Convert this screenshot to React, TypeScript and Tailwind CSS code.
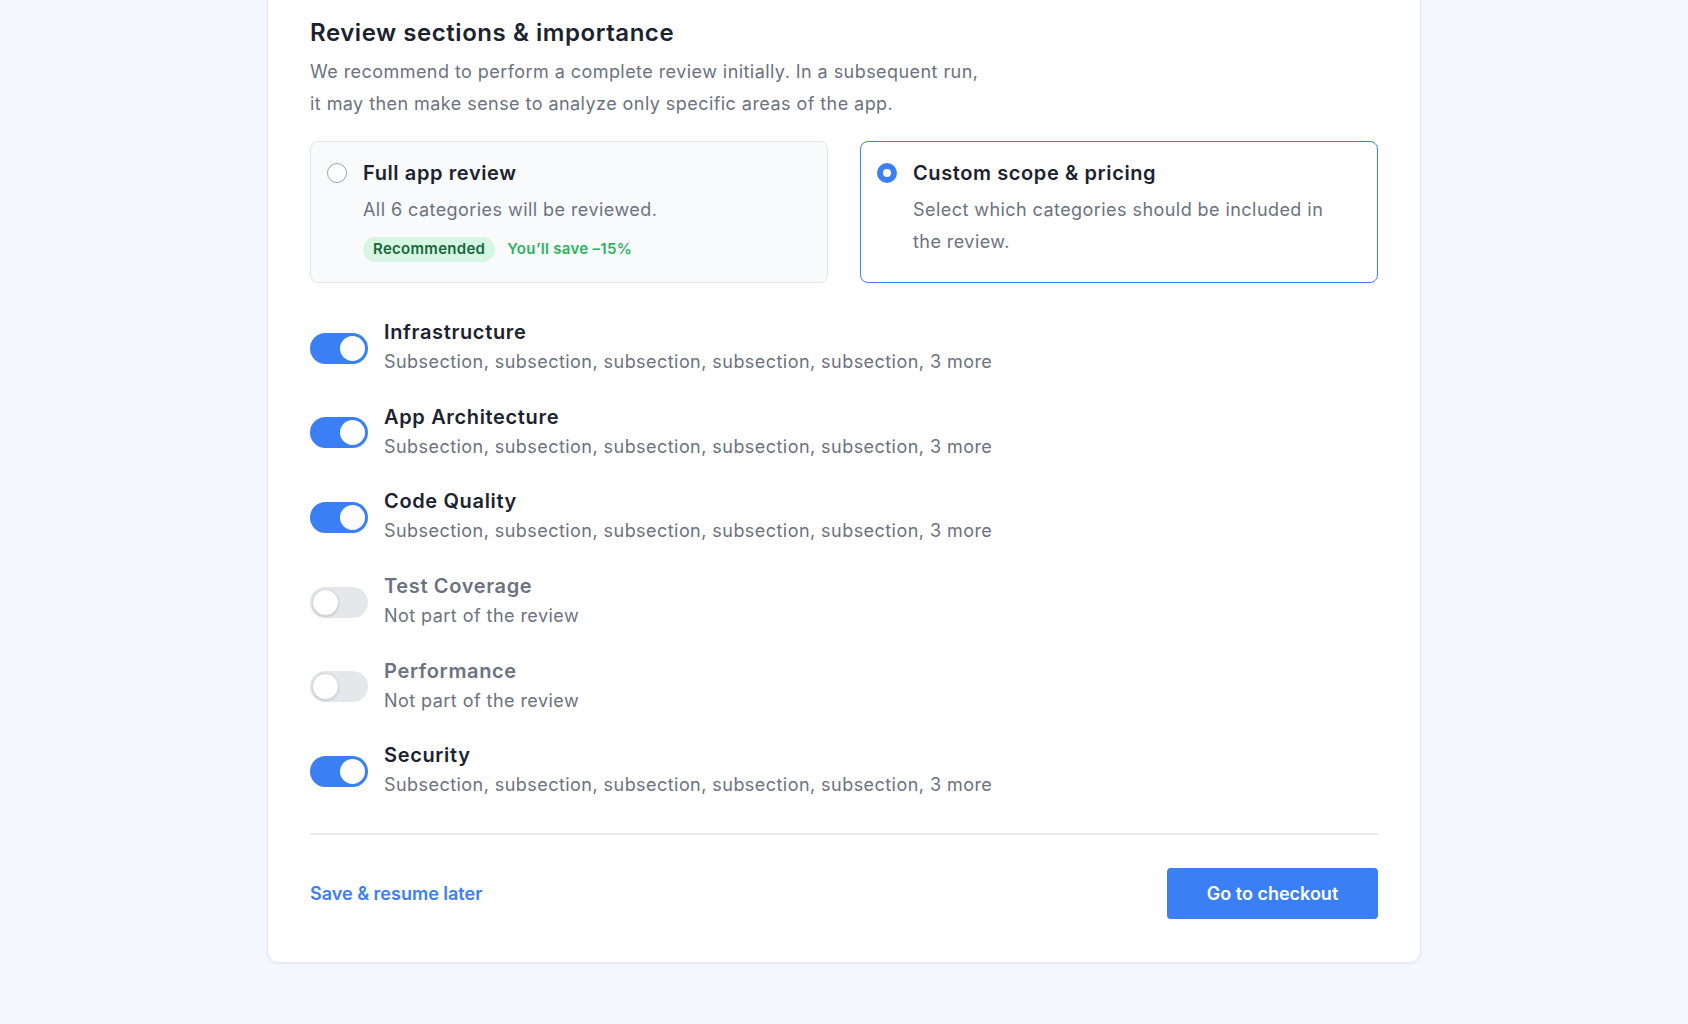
import React from "react";

type Cat = { name: string; on: boolean };

const cats: Cat[] = [
  { name: "Infrastructure", on: true },
  { name: "App Architecture", on: true },
  { name: "Code Quality", on: true },
  { name: "Test Coverage", on: false },
  { name: "Performance", on: false },
  { name: "Security", on: true },
];

function Toggle({ on }: { on: boolean }) {
  return on ? (
    <div className="flex h-[31px] w-[58px] shrink-0 items-center justify-end rounded-full bg-[#3b7ff5] px-[3px]">
      <div className="h-[25px] w-[25px] rounded-full bg-white" />
    </div>
  ) : (
    <div className="flex h-[31px] w-[58px] shrink-0 items-center justify-start rounded-full bg-[#e5e7eb] px-[2px]">
      <div className="h-[27px] w-[27px] rounded-full border border-[#d1d5db] bg-white shadow-sm" />
    </div>
  );
}

export default function App() {
  return (
    <div
      className="min-h-[1024px] w-full bg-[#f4f7fd]"
      style={{ fontFamily: "Inter, 'Noto Sans', sans-serif" }}
    >
      <div className="mx-auto w-[1154px] rounded-b-xl border border-t-0 border-[#e6e9f0] bg-white px-[42px] pb-[43px] pt-[17px] shadow-[0_1px_3px_rgba(15,23,42,0.06)]">
        <h2 className="text-[24px] font-semibold leading-8 tracking-[0.55px] text-[#1c2230]">
          Review sections &amp; importance
        </h2>
        <p className="mt-[7px] text-[18px] leading-8 tracking-[0.44px] text-[#6b7280]">
          We recommend to perform a complete review initially. In a subsequent run,
          <br />
          it may then make sense to analyze only specific areas of the app.
        </p>

        <div className="mt-[21px] grid grid-cols-2 gap-8">
          <div className="flex gap-4 rounded-lg border border-[#e3e5ea] bg-[#f9fafb] pb-[20px] pl-4 pr-4 pt-[17px]">
            <div className="mt-1 h-5 w-5 shrink-0 rounded-full border-[1.5px] border-[#9ca3af] bg-white" />
            <div className="flex flex-col">
              <div className="text-[20px] font-semibold leading-7 tracking-[0.6px] text-[#1c2230]">Full app review</div>
              <div className="mt-[7px] text-[18px] leading-8 tracking-[0.44px] text-[#6b7280]">
                All 6 categories will be reviewed.
              </div>
              <div className="mt-[11px] flex items-center gap-3">
                <span className="flex h-[25px] items-center rounded-full bg-[#d6f6e3] px-[10px] text-[15px] font-semibold tracking-[0.3px] text-[#17663a]">
                  Recommended
                </span>
                <span className="text-[15px] font-semibold tracking-[0.3px] text-[#2bb462]">You’ll save –15%</span>
              </div>
            </div>
          </div>

          <div className="flex gap-4 rounded-lg border-[1.5px] border-[#3b7ff5] bg-white pb-[20px] pl-4 pr-[30px] pt-[17px]">
            <div className="mt-1 h-5 w-5 shrink-0 rounded-full border-[6px] border-[#3b7ff5] bg-white" />
            <div className="flex flex-col">
              <div className="text-[20px] font-semibold leading-7 tracking-[0.6px] text-[#1c2230]">Custom scope &amp; pricing</div>
              <div className="mt-[7px] text-[18px] leading-8 tracking-[0.44px] text-[#6b7280]">
                Select which categories should be included in the review.
              </div>
            </div>
          </div>
        </div>

        <div className="mt-[35px] flex flex-col gap-[24.7px]">
          {cats.map((c) => (
            <div key={c.name} className="flex items-center gap-4">
              <Toggle on={c.on} />
              <div className="flex flex-col">
                <div
                  className={
                    c.on
                      ? "text-[20px] font-semibold leading-7 tracking-[0.65px] text-[#1c2230]"
                      : "text-[20px] font-semibold leading-7 tracking-[0.65px] text-[#6b7280]"
                  }
                >
                  {c.name}
                </div>
                <div className="text-[18px] leading-8 tracking-[0.45px] text-[#6b7280]">
                  {c.on
                    ? "Subsection, subsection, subsection, subsection, subsection, 3 more"
                    : "Not part of the review"}
                </div>
              </div>
            </div>
          ))}
        </div>

        <div className="mt-8 h-[2px] w-full bg-[#e9eaf0]" />

        <div className="flex items-center justify-between pt-[33px]">
          <a className="cursor-pointer text-[18px] font-semibold text-[#3b7ff5]">Save &amp; resume later</a>
          <button className="flex h-[51px] w-[211px] items-center justify-center rounded-[4px] bg-[#3b7ff5] text-[18px] font-semibold text-white">
            Go to checkout
          </button>
        </div>
      </div>
    </div>
  );
}
